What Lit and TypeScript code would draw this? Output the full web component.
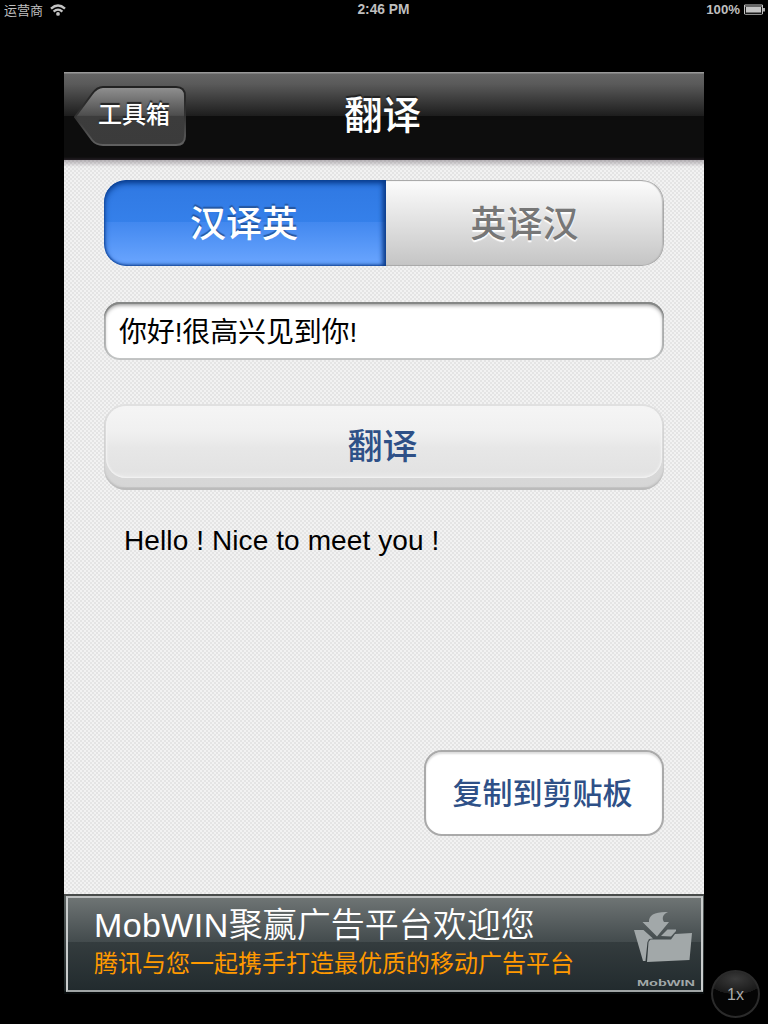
import { LitElement, html, css } from "lit";
import { customElement, state } from "lit/decorators.js";

@customElement("status-bar")
class StatusBar extends LitElement {
  static styles = css`
    :host { display: grid; grid-template-columns: 1fr auto 1fr; height: 20px; align-items: center;
      color: #bfbfbf; font: bold 13.8px/20px "Liberation Sans", "Noto Sans CJK SC", sans-serif; }
    .left { display: flex; align-items: center; gap: 7px; padding-left: 4px; }
    .carrier { font: 400 13px/19px "Noto Sans CJK SC", sans-serif; height: 20px; }
    .time { padding-right: 1px; }
    .right { display: flex; align-items: center; justify-content: flex-end; gap: 4px; padding-right: 3px; font-size: 13.2px; }
    svg { display: block; margin-bottom: 1px; }
  `;
  render() {
    return html`
      <div class="left"><span class="carrier">运营商</span>
        <svg width="16" height="12" viewBox="0 0 16 12" fill="none" stroke="#c4c4c4">
          <path d="M1 4.600Q8-1.600 15 4.600" stroke-width="2.400"/><path d="M3.600 7.600Q8 3.600 12.400 7.600" stroke-width="2.300"/>
          <circle cx="8" cy="9.900" r="1.900" fill="#c4c4c4" stroke="none"/>
        </svg></div>
      <span class="time">2:46 PM</span>
      <div class="right"><span>100%</span>
        <svg width="21" height="11" viewBox="0 0 21 11">
          <rect x=".5" y=".5" width="18" height="10" rx="1" fill="#1a1a1a" stroke="#8e8e8e"/>
          <rect x="1" y="0" width="17" height="3" fill="#666"/><rect x="2" y="3" width="15" height="5.5" fill="#c4c4c4"/>
          <path d="M.5 1V10M18.5 1V10" stroke="#c4c4c4"/><rect x="19" y="4" width="2" height="3.5" fill="#aaa"/>
        </svg></div>`;
  }
}

@customElement("nav-bar")
class NavBar extends LitElement {
  static styles = css`
    :host { display: grid; grid-template-columns: 122px 1fr 126px; height: 88px; box-sizing: border-box;
      background: linear-gradient(#999 0 1px, #646464 2px, #5a5a5a 12px, #1d1d1d 44px, #0d0d0d 44px, #0d0d0d 85px, #251f25 88px);
      color: #fff; font-family: "Noto Sans CJK SC", sans-serif; }
    .back { display: grid; margin: 14px 0 0 10px; width: 112px; height: 60px; }
    .back > * { grid-area: 1 / 1; }
    .label { font-size: 24px; line-height: 54px; padding-left: 24px; font-weight: 500; white-space: nowrap; text-shadow: 0 -2px 1px #222; }
    .title { text-align: center; font-size: 38.5px; line-height: 81px; font-weight: 500; text-shadow: 0 -2px 1px #222; padding-left: 1px; }
  `;
  render() {
    return html`
      <div class="back">
        <svg width="112" height="60" viewBox="0 0 112 60">
          <defs><linearGradient id="g" x1="0" y1="0" x2="0" y2="1">
            <stop offset="0" stop-color="#919191"/><stop offset=".49" stop-color="#4d4d4d"/>
            <stop offset=".5" stop-color="#3c3c3c"/><stop offset="1" stop-color="#3b3b3b"/></linearGradient>
            <linearGradient id="e" x1="0" y1="0" x2="0" y2="1"><stop offset="0" stop-color="#222"/>
            <stop offset=".5" stop-color="#333"/><stop offset="1" stop-color="#606060"/></linearGradient></defs>
          <path d="M1 31L18 8Q23 1 29 1H102Q111 1 111 10V50Q111 59 102 59H29Q22 59 18 54Z" fill="url(#g)" stroke="url(#e)" stroke-width="2"/>
        </svg>
        <span class="label">工具箱</span>
      </div>
      <div class="title">翻译</div>`;
  }
}

@customElement("ad-banner")
class AdBanner extends LitElement {
  static styles = css`
    :host { display: flex; box-sizing: border-box; height: 100px; padding: 2px 0 2px; background: linear-gradient(#484b4a 0 2px, #59605f 2px, #1b2223 97px, #080c0d 98px); }
    .box { flex: 1; display: flex; justify-content: space-between; box-sizing: border-box; margin: 0 1px 0 2px; border: 2px solid #c9cccc; border-bottom-color: #9fa4a4;
      border-top-color: #bdc0c0; background: linear-gradient(#6e7474, #434b4d 44px, #343c3e 44px, #222b2e 92px); }
    .copy { padding-left: 26px; white-space: nowrap; }
    .head { font: 350 34px/44px "Liberation Sans", "Noto Sans CJK SC", sans-serif; color: #fff; padding-top: 5px; }
    .latin { letter-spacing: .4px; }
    .sub { font: 400 24px/30px "Noto Sans CJK SC", sans-serif; color: #f90; }
    .logo { width: 62px; padding: 13px 5px 0 0; }
    svg { display: block; }
  `;
  render() {
    return html`<div class="box">
      <div class="copy"><div class="head"><span class="latin">MobWIN</span>聚赢广告平台欢迎您</div><div class="sub">腾讯与您一起携手打造最优质的移动广告平台</div></div>
      <div class="logo"><svg width="62" height="78" viewBox="0 0 62 78">
        <g fill="#a2a8a9">
          <path d="M0 19H9.500L19 27.500L15 28L13.500 31L11.500 50H9Z"/>
          <path d="M27 25L33.500 18.500L42 18.500V20L37 25.500Z"/>
          <path d="M16.500 28.500H37L41 23L58 22L55.500 49L13 51L14.500 31Z"/>
          <path d="M8.500 11H15C14.500 4 21 .5 34 1C28 3.500 28 8 30 11H35L23 25.500Z"/>
        </g>
        <text x="3" y="75" font-family="Liberation Sans, sans-serif" font-weight="bold" font-size="9.500" textLength="58" lengthAdjust="spacingAndGlyphs" fill="#a2a8a9">MobWIN</text>
      </svg></div>
    </div>`;
  }
}

@customElement("app-root")
class AppRoot extends LitElement {
  @state() private output = "Hello ! Nice to meet you !";
  static styles = css`
    :host { display: block; position: relative; width: 768px; height: 1024px; overflow: hidden; background: #000;
      font-family: "Liberation Sans", "Noto Sans CJK SC", sans-serif; }
    .phone { width: 640px; margin: 52px auto 0; display: flex; flex-direction: column; }
    .page { height: 734px; box-sizing: border-box; padding: 20px 40px 0; display: flex; flex-direction: column;
      background: linear-gradient(rgba(90,80,90,.4), transparent 7px), repeating-conic-gradient(#f2f2f2 0 25%, #e4e4e4 0 50%) 0 0 / 4px 4px; }
    .segments { display: flex; height: 86px; border-radius: 22px; overflow: hidden; font: 500 36px/83px "Noto Sans CJK SC", sans-serif; text-align: center; }
    .on { width: 282px; box-sizing: border-box; padding-right: 2px; color: #fff; text-shadow: 0 -2px 1px #2557a0; border-radius: 22px 0 0 22px;
      background: linear-gradient(#2f78e2, #3580ea 42px, #4288ef 42px, #6ba6ff);
      box-shadow: inset 0 3px 6px #063a8a, inset -3px 0 5px #123f8c, inset 1px -1px 2px #2a62bd; }
    .off { flex: 1; color: #777; text-shadow: 0 2px 1px #fff; border: solid #aaa; border-width: 1px 1px 1px 0; border-radius: 0 22px 22px 0;
      line-height: 81px; background: linear-gradient(#fcfcfc, #c5c5c5); box-shadow: inset -1px 0 1px #bbb; }
    .field { margin-top: 36px; height: 58px; box-sizing: border-box; border-radius: 16px; padding: 1px 15px 0; background: #fff; font-size: 28px; line-height: 59px; letter-spacing: -.15px; color: #000;
      box-shadow: inset 0 2px 0 #858786, inset 0 3px 4px #888, inset 0 0 0 2px #c4c6c6; }
    .field, .go, .copy { white-space: nowrap; }
    .go { margin-top: 44px; height: 86px; box-sizing: border-box; padding: 2px 2px 0; border-radius: 22px; background: linear-gradient(#e0e0e0, #d6d6d6 83px, #b9b9b9 84px);
      box-shadow: inset 0 -2px 2px #bbb; }
    .face { height: 72px; border-radius: 20px; background: linear-gradient(#f5f5f5, #f0f0f0 26px, #e7e7e7 42px, #e3e3e3 65px, #e8e8e8); box-shadow: inset 0 0 2px 1px #f4f4f4;
      text-align: center; padding-right: 3px; font: 500 35px/75px "Noto Sans CJK SC", sans-serif; color: #2e5087; }
    .result { margin: 35px 0 0 20px; font-size: 28px; line-height: 32px; letter-spacing: .1px; color: #000; }
    .copy { align-self: flex-end; margin-top: 193px; width: 240px; height: 86px; box-sizing: border-box; border: 2px solid #aaa; border-radius: 18px; background: #fff;
      box-shadow: inset 0 2px 2px #ddd; text-align: center; padding-right: 3px; font: 500 30px/79px "Noto Sans CJK SC", sans-serif; color: #2e5087; }
    .zoom { position: absolute; left: 711px; top: 970px; width: 49px; height: 48px; box-sizing: border-box; border: 2px solid #2b2b2b; border-radius: 50%;
      background: radial-gradient(ellipse 28px 15px at 50% 16%, #3a3a3a, #191919 99%, transparent); background-color: #050505;
      text-align: center; font-size: 16px; line-height: 45px; color: #aaa; }
  `;
  render() {
    return html`
      <status-bar></status-bar>
      <main class="phone">
        <nav-bar></nav-bar>
        <section class="page">
          <div class="segments"><div class="on">汉译英</div><div class="off">英译汉</div></div>
          <div class="field">你好!很高兴见到你!</div>
          <div class="go"><div class="face">翻译</div></div>
          <div class="result">${this.output}</div>
          <div class="copy">复制到剪贴板</div>
        </section>
        <ad-banner></ad-banner>
      </main>
      <div class="zoom">1x</div>`;
  }
}
